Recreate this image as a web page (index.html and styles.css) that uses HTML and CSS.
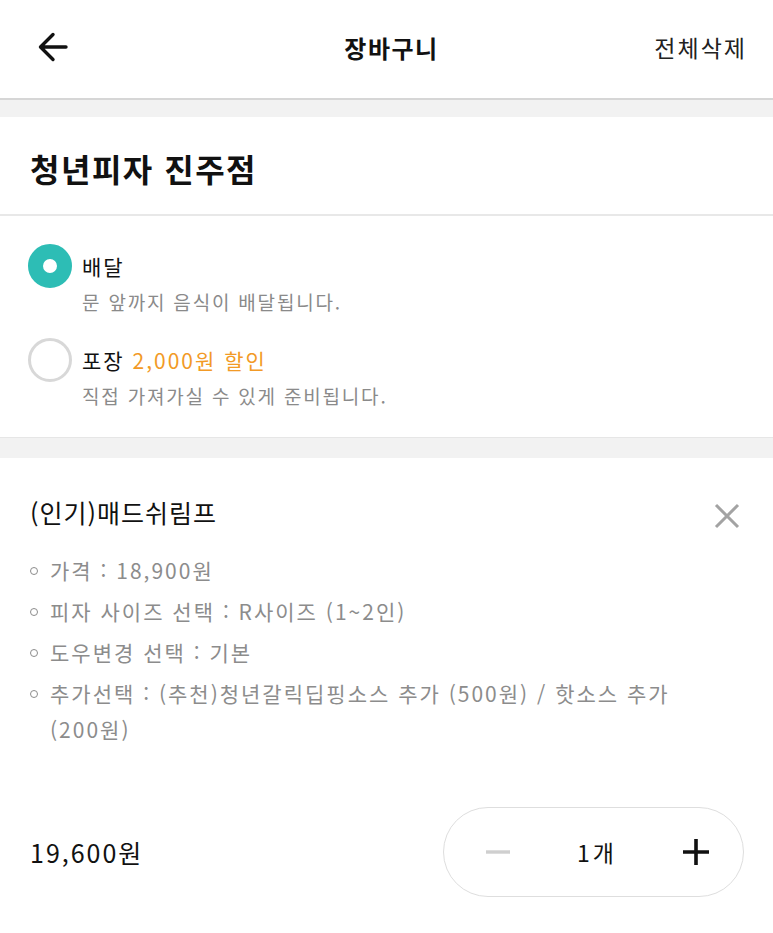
FILE: index.html
```html
<!DOCTYPE html>
<html lang="ko">
<head>
<meta charset="utf-8">
<title>장바구니</title>
<link rel="stylesheet" href="styles.css">
</head>
<body>
<div class="page">
  <header class="topbar">
    <button class="back" aria-label="뒤로">
      <svg width="34" height="34" viewBox="0 0 34 34"><path d="M30 17H5M17 4.5L4.5 17L17 29.5" fill="none" stroke="#111" stroke-width="3.4" stroke-linecap="round" stroke-linejoin="round"/></svg>
    </button>
    <h1 class="title">장바구니</h1>
    <span class="clear">전체삭제</span>
  </header>
  <div class="band"></div>

  <section class="store">
    <h2 class="store-name">청년피자 진주점</h2>
  </section>

  <section class="options">
    <div class="option">
      <span class="radio on"></span>
      <div class="opt-title">배달</div>
      <div class="opt-sub">문 앞까지 음식이 배달됩니다.</div>
    </div>
    <div class="option">
      <span class="radio"></span>
      <div class="opt-title">포장 <span class="discount">2,000원 할인</span></div>
      <div class="opt-sub">직접 가져가실 수 있게 준비됩니다.</div>
    </div>
  </section>
  <div class="band band-lg"></div>

  <section class="item">
    <div class="item-head">
      <h3 class="item-name">(인기)매드쉬림프</h3>
      <button class="remove" aria-label="삭제">
        <svg width="26" height="26" viewBox="0 0 26 26"><path d="M2 2L24 24M24 2L2 24" fill="none" stroke="#a3a3a3" stroke-width="3"/></svg>
      </button>
    </div>
    <ul class="details">
      <li>가격 : 18,900원</li>
      <li>피자 사이즈 선택 : R사이즈 (1~2인)</li>
      <li>도우변경 선택 : 기본</li>
      <li>추가선택 : (추천)청년갈릭딥핑소스 추가 (500원) / 핫소스 추가<br>(200원)</li>
    </ul>
    <div class="item-foot">
      <span class="total">19,600원</span>
      <div class="stepper">
        <button class="step minus" aria-label="빼기">
          <svg width="26" height="26" viewBox="0 0 26 26"><path d="M1 13H25" stroke="#cfcfcf" stroke-width="3.4"/></svg>
        </button>
        <span class="qty">1개</span>
        <button class="step plus" aria-label="더하기">
          <svg width="28" height="28" viewBox="0 0 28 28"><path d="M1 14H27M14 1V27" stroke="#111" stroke-width="3.6"/></svg>
        </button>
      </div>
    </div>
  </section>
</div>
</body>
</html>
```

FILE: styles.css
```css
* { box-sizing: border-box; }
html, body { margin: 0; padding: 0; background: #fff; }
body {
  font-family: "Noto Sans CJK KR", "Noto Sans", sans-serif;
  color: #111;
}
button {
  border: 0;
  background: none;
  padding: 0;
  margin: 0;
  cursor: pointer;
  display: flex;
  align-items: center;
  justify-content: center;
}
h1, h2, h3 { margin: 0; }

.page { width: 773px; }

.topbar {
  height: 100px;
  display: grid;
  grid-template-columns: 1fr auto 1fr;
  align-items: center;
  padding: 0 26px 4px 36px;
  border-bottom: 2px solid #d6d6d6;
}
.back { justify-self: start; width: 34px; height: 34px; }
.title { font-size: 24px; font-weight: 700; letter-spacing: 1.5px; }
.clear { justify-self: end; font-size: 23px; color: #222; letter-spacing: 2px; }

.band { height: 17px; background: #f2f2f2; }
.band-lg { height: 21px; border-top: 1px solid #e6e6e6; }

.store {
  height: 99px;
  display: flex;
  align-items: center;
  padding: 4px 30px 0;
  border-bottom: 2px solid #e8e8e8;
}
.store-name { font-size: 32px; font-weight: 700; letter-spacing: 1.5px; }

.options {
  padding: 28px 28px 27px;
  display: flex;
  flex-direction: column;
  gap: 22px;
}
.option {
  display: grid;
  grid-template-columns: 44px 1fr;
  column-gap: 10px;
}
.radio {
  grid-row: 1;
  width: 44px;
  height: 44px;
  border-radius: 50%;
  border: 3px solid #d8d8d8;
  background: #fff;
}
.radio.on {
  border: 15px solid #2dbdb5;
}
.opt-title {
  grid-column: 2;
  grid-row: 1;
  font-size: 21px;
  line-height: 44px;
  letter-spacing: 2px;
  color: #111;
}
.discount { color: #f29a26; }
.opt-sub {
  grid-column: 2;
  font-size: 19px;
  line-height: 28px;
  letter-spacing: 1.8px;
  color: #8a8a8a;
}

.item { padding: 36px 33px 0 30px; }
.item-head {
  display: flex;
  justify-content: space-between;
  align-items: center;
  height: 36px;
}
.item-name { font-size: 25px; font-weight: 400; color: #111; letter-spacing: 1px; }
.remove { width: 26px; height: 26px; margin-top: 8px; }

.details {
  list-style: none;
  margin: 22px 0 0;
  padding: 0;
  display: flex;
  flex-direction: column;
  gap: 5px;
}
.details li {
  position: relative;
  padding-left: 20px;
  font-size: 21px;
  line-height: 36px;
  letter-spacing: 2px;
  color: #8c8c8c;
}
.details li::before {
  content: "";
  position: absolute;
  left: 0;
  top: 15px;
  width: 6px;
  height: 6px;
  border-radius: 50%;
  border: 1.5px solid #8c8c8c;
}

.item-foot {
  margin-top: 60px;
  display: flex;
  justify-content: space-between;
  align-items: center;
}
.total { font-size: 25px; color: #111; letter-spacing: 2px; }
.stepper {
  width: 301px;
  height: 90px;
  border: 1px solid #dedede;
  border-radius: 45px;
  display: flex;
  align-items: center;
  justify-content: space-between;
  padding: 0 33px 0 40px;
  margin-right: -4px;
}
.step { width: 28px; height: 28px; }
.qty { font-size: 23px; color: #111; letter-spacing: 3px; }
```
